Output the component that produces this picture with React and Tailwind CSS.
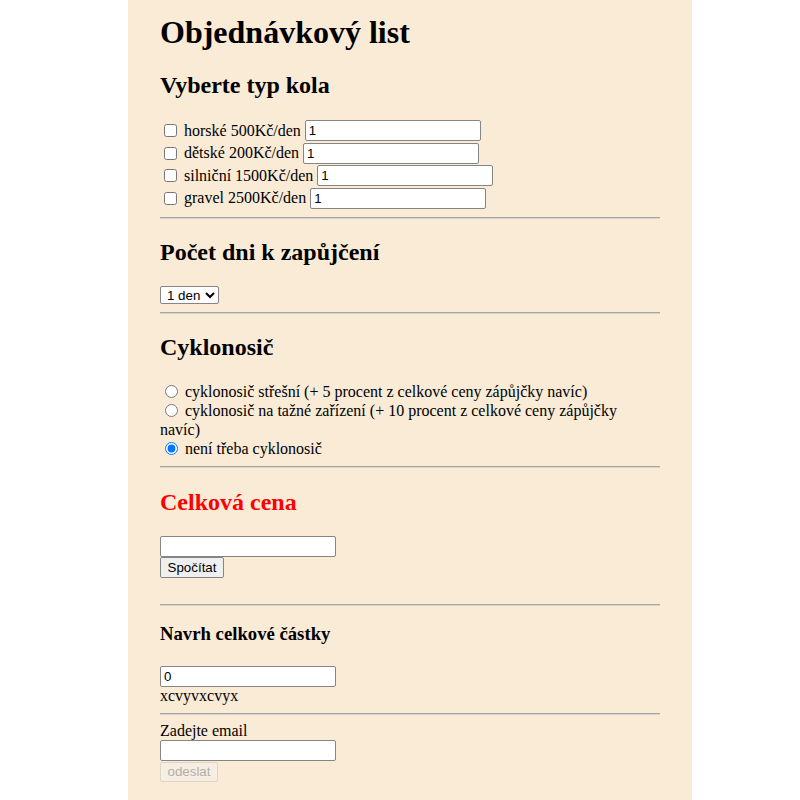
import { useState } from "react";

const kola = [
  { id: "horske", label: "horské 500Kč/den" },
  { id: "detske", label: "dětské 200Kč/den" },
  { id: "silnicni", label: "silniční 1500Kč/den" },
  { id: "gravel", label: "gravel 2500Kč/den" },
];

const sans = { fontFamily: '"Liberation Sans", Arial, sans-serif' };

function Line({ className = "" }) {
  return <div className={"h-[2px] border-t border-t-[#a8a5a0] border-b border-b-[#d9d5ce] " + className} />;
}

function TextBox({ value, className = "" }) {
  return (
    <input
      type="text"
      defaultValue={value}
      className={
        "h-[21px] w-[176px] rounded-[2px] border border-[#858585] bg-white px-[3px] text-[13.33px] text-black outline-none " +
        className
      }
      style={sans}
    />
  );
}

export default function App() {
  const [nosic, setNosic] = useState("zadny");

  return (
    <div className="min-h-[800px] bg-white">
      <div
        className="ml-[128px] min-h-[800px] w-[564px] bg-[#faebd7] px-8 pt-[14px] text-[16px] text-black"
        style={{ fontFamily: '"Liberation Serif", "Times New Roman", serif' }}
      >
        <h1 className="text-[32px] font-bold leading-[36.8px]">Objednávkový list</h1>

        <h2 className="mt-[21px] text-[24px] font-bold leading-[27.6px]">Vyberte typ kola</h2>
        <div className="mt-[19.9px]">
          {kola.map((k) => (
            <div key={k.id} className="flex h-[22.5px] items-center">
              <input type="checkbox" className="ml-[4px] mr-[7px] h-[13px] w-[13px]" />
              <span className="mr-[4px]">{k.label}</span>
              <TextBox value="1" />
            </div>
          ))}
        </div>
        <Line className="mt-[7.5px]" />

        <h2 className="mt-[19.9px] text-[24px] font-bold leading-[27.6px]">Počet dni k zapůjčení</h2>
        <select
          className="mt-[19.9px] block h-[18px] w-[59px] rounded-[2px] border border-[#858585] bg-white pl-[2px] text-[13.33px] leading-[15px]"
          style={sans}
          defaultValue="1"
        >
          <option value="1">1 den</option>
          <option value="2">2 dny</option>
          <option value="3">3 dny</option>
        </select>
        <Line className="mt-[8px]" />

        <h2 className="mt-[19.9px] text-[24px] font-bold leading-[27.6px]">Cyklonosič</h2>
        <div className="mt-[19.9px] leading-[19.25px]">
          <label className="block">
            <input
              type="radio"
              name="nosic"
              checked={nosic === "strecha"}
              onChange={() => setNosic("strecha")}
              className="ml-[5px] mr-[7px] h-[13px] w-[13px] align-[-1px]"
            />
            cyklonosič střešní (+ 5 procent z celkové ceny zápůjčky navíc)
          </label>
          <label className="block">
            <input
              type="radio"
              name="nosic"
              checked={nosic === "tazne"}
              onChange={() => setNosic("tazne")}
              className="ml-[5px] mr-[7px] h-[13px] w-[13px] align-[-1px]"
            />
            cyklonosič na tažné zařízení (+ 10 procent z celkové ceny zápůjčky navíc)
          </label>
          <label className="block">
            <input
              type="radio"
              name="nosic"
              checked={nosic === "zadny"}
              onChange={() => setNosic("zadny")}
              className="ml-[5px] mr-[7px] h-[13px] w-[13px] align-[-1px]"
            />
            není třeba cyklonosič
          </label>
        </div>
        <Line className="mt-[7.5px]" />

        <h2 className="mt-[20.5px] text-[24px] font-bold leading-[27.6px] text-[#ff0000]">Celková cena</h2>
        <div className="mt-[19.5px]">
          <TextBox value="" className="block" />
          <button
            className="block h-[21px] w-[64px] rounded-[2px] border border-[#858585] bg-[#efefef] text-[13.33px] leading-[19px]"
            style={sans}
          >
            Spočítat
          </button>
        </div>
        <Line className="mt-[26px]" />

        <h3 className="mt-[17.5px] text-[18.72px] font-bold leading-[21.5px]">Navrh celkové částky</h3>
        <TextBox value="0" className="mt-[21px] block" />
        <p className="leading-[18.4px]">xcvyvxcvyx</p>
        <Line className="mt-[7.5px]" />

        <p className="mt-[7px] leading-[18.4px]">Zadejte email</p>
        <TextBox value="" className="mt-[0.5px] block" />
        <button
          disabled
          className="mt-[1px] block h-[20px] w-[58px] rounded-[2px] border border-[#ddd5ca] bg-[#f6eee3] text-[13.33px] leading-[18px] text-[#b3aea7]"
          style={sans}
        >
          odeslat
        </button>
      </div>
    </div>
  );
}
